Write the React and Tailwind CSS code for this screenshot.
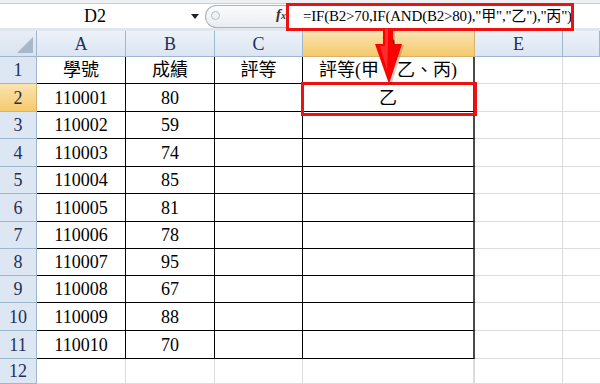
const cols = ["A", "B", "C", "D", "E", ""];
const heights = [27, 28, 27, 28, 27, 28, 27, 27, 27, 28, 28, 25];
const data = [
  ["學號", "成績", "評等", "評等(甲、乙、丙)"],
  ["110001", "80", "", "乙"],
  ["110002", "59", "", ""],
  ["110003", "74", "", ""],
  ["110004", "85", "", ""],
  ["110005", "81", "", ""],
  ["110006", "78", "", ""],
  ["110007", "95", "", ""],
  ["110008", "67", "", ""],
  ["110009", "88", "", ""],
  ["110010", "70", "", ""],
  ["", "", "", ""],
];

function FormulaBar() {
  return (
    <div className="h-[27px] bg-[#e1e6ec] flex">
      <div className="w-[203px] h-[24px] bg-white flex items-center relative">
        <span className="w-[190px] text-center text-[18px] text-black leading-none">D2</span>
        <span className="absolute left-[191px] top-[10px] w-0 h-0 border-l-[4px] border-r-[4px] border-t-[5px] border-l-transparent border-r-transparent border-t-[#222]" />
      </div>
      <div className="w-[2px] h-[24px] bg-white" />
      <div className="w-[81px] h-[24px] bg-white relative">
        <div className="absolute left-0 top-[1px] w-[81px] h-[23px] rounded-l-full border border-r-0 border-[#a9b2bd] bg-gradient-to-b from-[#fbfcfd] to-[#e9edf2]" />
        <div className="absolute left-[6px] top-[7px] w-[9px] h-[9px] rounded-full border border-[#b7bec8] bg-[#eef1f4]" />
        <span className="absolute left-[71px] top-[3px] text-[15px] italic font-bold text-[#333] leading-none">
          f<span className="text-[10px]">x</span>
        </span>
      </div>
      <div className="flex-1 h-[24px] bg-white flex items-center pl-[17px]">
        <span className="text-[15px] text-black leading-none tracking-[-0.2px] whitespace-nowrap">
          =IF(B2&gt;70,IF(AND(B2&gt;80),"甲","乙"),"丙")
        </span>
      </div>
    </div>
  );
}

function HeaderRow() {
  return (
    <div className="grid grid-cols-[37px_89px_89px_88px_172px_88px_1fr] h-[26px]">
      <div className="bg-gradient-to-b from-[#e8eef7] to-[#d9e3ef] border-r border-b border-[#9eb6ce] relative overflow-hidden">
        <div className="absolute right-[3px] bottom-[3px] w-0 h-0 border-b-[16px] border-l-[16px] border-b-[#a9b8c9] border-l-transparent" />
      </div>
      {cols.map((c, i) => (
        <div
          key={i}
          className={
            "flex items-center justify-center border-r border-b text-[18px] leading-none " +
            (c === "D"
              ? "bg-gradient-to-b from-[#fbe4b0] to-[#f4c96a] border-[#d9b26a] text-[#1f2f4a]"
              : "bg-gradient-to-b from-[#edf2f9] to-[#dbe5f1] border-[#9eb6ce] text-[#1f2f5a]")
          }
        >
          {c}
        </div>
      ))}
    </div>
  );
}

function Row({ r }) {
  const inTable = r < 11;
  return (
    <div className="grid grid-cols-[37px_89px_89px_88px_172px_88px_1fr]" style={{ height: heights[r] }}>
      <div
        className={
          "flex items-center justify-center border-r border-b text-[18px] leading-none " +
          (r === 1
            ? "bg-gradient-to-b from-[#fbe4b0] to-[#f4c96a] border-[#d9b26a] text-[#1f2f4a]"
            : "bg-[#dde7f3] border-[#9eb6ce] text-[#1f2f5a]")
        }
      >
        {r + 1}
      </div>
      {data[r].map((v, i) => (
        <div
          key={i}
          className={
            "flex items-center justify-center text-[18px] text-black leading-none bg-white border-b " +
            (inTable ? "border-black " : "border-[#dadcdd] ") +
            (i === 3 ? "border-r-2 " : "border-r ") +
            (inTable ? (i === 3 ? "border-r-[#4a4a4a]" : "border-r-black") : "border-r-[#dadcdd]")
          }
        >
          {v}
        </div>
      ))}
      <div className="bg-white border-r border-b border-[#dadcdd]" />
      <div className="bg-white border-b border-[#dadcdd]" />
    </div>
  );
}

export default function App() {
  return (
    <div className="w-[600px] h-[384px] overflow-hidden bg-white relative font-['Liberation_Serif','Noto_Sans_CJK_TC',serif]">
      <div className="h-[4px] bg-[#eef1f4] border-b border-[#c7cfd8]" />
      <FormulaBar />
      <HeaderRow />
      {heights.map((_, r) => (
        <Row key={r} r={r} />
      ))}

      {/* red highlight boxes */}
      <div className="absolute left-[286px] top-[3px] w-[288px] h-[28px] border-[3px] border-[#ee1111]" />
      <div className="absolute left-[301px] top-[82px] w-[176px] h-[34px] border-[3px] border-[#ee1111]" />

      {/* arrow */}
      <svg className="absolute left-[370px] top-[28px]" width="40" height="60" viewBox="370 28 40 60">
        <polygon points="384,31 395,31 395,45 404,45 391,86 377,45 384,45" fill="#000" opacity="0.18" />
        <polygon points="383,29 393,29 393,44 402,44 389,84 375,44 383,44" fill="#ff0000" />
        <polygon points="385,29 388,29 388,44 387,70 380,46 385,46" fill="#ff5a5a" opacity="0.5" />
      </svg>
    </div>
  );
}
